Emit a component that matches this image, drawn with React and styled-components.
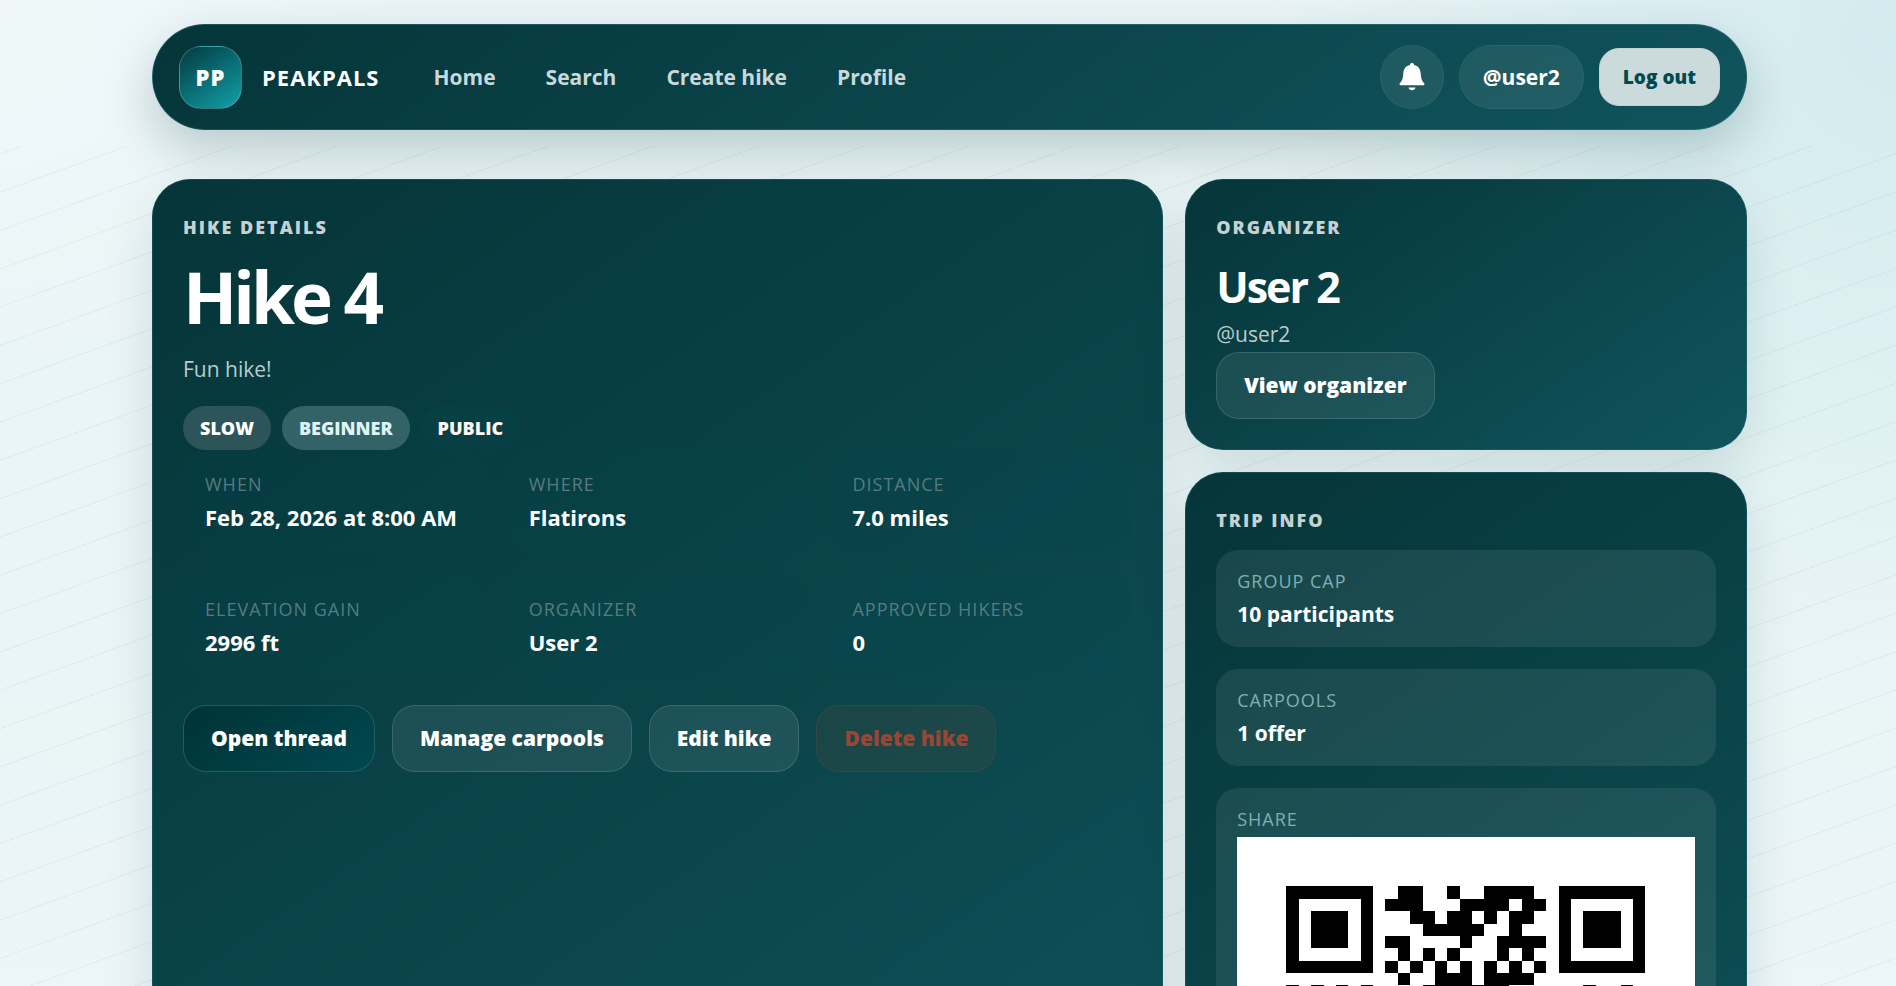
import styled, { createGlobalStyle } from "styled-components";

const GlobalStyle = createGlobalStyle`
  * {
    box-sizing: border-box;
  }

  body {
    margin: 0;
    font-family: "Segoe UI", "Open Sans", "Noto Sans", sans-serif;
    font-size: 21px;
    line-height: 35px;
    color: white;
    background: #eaf4f7;
  }

  h1, h2, p, dl, dt, dd {
    margin: 0;
  }

  a {
    color: inherit;
    text-decoration: none;
  }
`;

const Page = styled.div`
  position: relative;
  height: 100vh;
  overflow-y: auto;
  scrollbar-width: none;
  padding: 24px 149px 48px 152px;
  background:
    radial-gradient(circle at 0 0, rgba(255, 255, 255, 0.25), transparent 420px),
    radial-gradient(circle at 100% 4%, rgba(0, 150, 155, 0.1), transparent 640px),
    linear-gradient(180deg, #ebf5f8 0%, #e9f5f6 60%, #ecf5f8 100%);
`;

/* thin contour lines behind the cards */
const Contours = styled.div`
  position: absolute;
  inset: 146px 0 0;
  background: repeating-linear-gradient(
    160deg,
    transparent 0 7px,
    rgba(0, 60, 64, 0.05) 7px 8px,
    transparent 8px 36px
  );
`;

const NavBar = styled.header`
  position: relative;
  display: flex;
  align-items: center;
  height: 106px;
  padding: 0 26px;
  border: 1px solid rgba(80, 150, 155, 0.3);
  border-radius: 53px;
  background: linear-gradient(145deg, #053538, #10545c);
  box-shadow: 0 20px 50px rgba(0, 50, 54, 0.22);
`;

const Brand = styled.a`
  display: flex;
  align-items: center;
  gap: 20px;
  font-size: 22px;
  font-weight: 700;
  letter-spacing: 1px;
`;

const BrandMark = styled.span`
  display: flex;
  align-items: center;
  justify-content: center;
  width: 63px;
  height: 63px;
  border: 1px solid rgba(255, 255, 255, 0.2);
  border-radius: 22px;
  background: linear-gradient(145deg, #023a3e, #12a0ab);
  font-weight: 800;
`;

const NavLinks = styled.nav`
  display: flex;
  gap: 50px;
  margin-left: 54px;
  font-weight: 700;
  color: #c9d8da;
`;

const NavActions = styled.div`
  display: flex;
  align-items: center;
  gap: 15px;
  margin-left: auto;
`;

const GlassPill = styled.a`
  display: flex;
  align-items: center;
  justify-content: center;
  min-width: 64px;
  height: 64px;
  padding: 0 ${(props) => (props.$round ? "0" : "23px")};
  border: 1px solid rgba(255, 255, 255, 0.12);
  border-radius: 32px;
  background: rgba(255, 255, 255, 0.08);
  background-clip: padding-box;
  font-weight: 700;
`;

const LogoutButton = styled.button`
  height: 58px;
  padding: 0 23px;
  border: 1px solid #c3d3d4;
  border-radius: 20px;
  background: #cbdada;
  color: #004a50;
  font: inherit;
  font-size: 19px;
  font-weight: 800;
  cursor: pointer;
`;

const Layout = styled.main`
  position: relative;
  display: grid;
  grid-template-columns: minmax(0, 9fr) minmax(0, 5fr);
  gap: 22px;
  margin-top: 49px;
`;

const Sidebar = styled.aside`
  display: flex;
  flex-direction: column;
  gap: 22px;
`;

const Card = styled.section`
  padding: 31px;
  border-radius: 38px;
  background: linear-gradient(145deg, #053538, #10545c);
  box-shadow: 0 20px 50px rgba(0, 50, 54, 0.12), inset 0 0 0 1px rgba(60, 140, 145, 0.24);
`;

const Eyebrow = styled.p`
  margin-bottom: 12px;
  font-size: 18px;
  font-weight: 800;
  line-height: 35px;
  letter-spacing: 2px;
  text-transform: uppercase;
  color: #c5d2d3;
`;

const Title = styled.h1`
  font-size: 71px;
  font-weight: 700;
  line-height: 80px;
  letter-spacing: -4px;
`;

const OrganizerName = styled.h2`
  font-size: 43px;
  font-weight: 700;
  line-height: 60px;
  letter-spacing: -2px;
`;

const Muted = styled.p`
  color: #b9cccd;
`;

const Description = styled(Muted)`
  margin: 15px 0 19px;
`;

const Chips = styled.div`
  display: flex;
  gap: 11px;
`;

const chipTones = {
  slow: { bg: "#2d5458", color: "white" },
  beginner: { bg: "#336367", color: "#dff4f6" },
  public: { bg: "#064044", color: "#fff6f0" },
};

const Chip = styled.span`
  padding: 0 17px;
  border-radius: 22px;
  background: ${(props) => chipTones[props.$tone].bg};
  color: ${(props) => chipTones[props.$tone].color};
  font-size: 18px;
  font-weight: 800;
  line-height: 44px;
  text-transform: uppercase;
`;

const MetaGrid = styled.dl`
  display: grid;
  grid-template-columns: repeat(3, minmax(0, 1fr));
  gap: 22px;
  font-size: 22px;
`;

const MetaItem = styled.div`
  padding: 18px 22px;
  border-radius: 26px;
  background: rgba(0, 77, 82, 0.12);
`;

const MetaLabel = styled.dt`
  font-size: 18px;
  line-height: 32px;
  letter-spacing: 1px;
  text-transform: uppercase;
  color: ${(props) => (props.$bright ? "#80afb3" : "#567b80")};
`;

const MetaValue = styled.dd`
  font-weight: 700;
`;

const Actions = styled.div`
  display: flex;
  gap: 17px;
  margin-top: 27px;
`;

const buttonTones = {
  primary: {
    bg: "linear-gradient(145deg, #003336, #00484f)",
    border: "rgba(100, 170, 175, 0.28)",
    color: "white",
  },
  glass: {
    bg: "rgba(255, 255, 255, 0.08)",
    border: "rgba(255, 255, 255, 0.2)",
    color: "white",
  },
  danger: {
    bg: "rgba(150, 70, 50, 0.12)",
    border: "rgba(160, 75, 55, 0.3)",
    color: "#974734",
  },
};

const Button = styled.button`
  height: 67px;
  padding: 0 27px;
  border: 1px solid ${(props) => buttonTones[props.$tone].border};
  border-radius: 23px;
  background: ${(props) => buttonTones[props.$tone].bg};
  background-clip: padding-box;
  color: ${(props) => buttonTones[props.$tone].color};
  font: inherit;
  font-weight: 800;
  cursor: pointer;
`;

const InfoList = styled.dl`
  display: flex;
  flex-direction: column;
  gap: 22px;
`;

const InfoItem = styled.div`
  padding: 15px 21px;
  border-radius: 22px;
  background: rgba(255, 255, 255, 0.08);
`;

const QrFrame = styled.dd`
  margin-top: 2px;

  svg {
    display: block;
    width: 100%;
  }
`;

const details = [
  ["When", "Feb 28, 2026 at 8:00 AM"],
  ["Where", "Flatirons"],
  ["Distance", "7.0 miles"],
  ["Elevation gain", "2996 ft"],
  ["Organizer", "User 2"],
  ["Approved hikers", "0"],
];

const tripInfo = [
  ["Group cap", "10 participants"],
  ["Carpools", "1 offer"],
];

const qrRows = [
  "00000000011001001111000000000",
  "00000000111000111101100000000",
  "00000000001101101011000000000",
  "00000000000111110010000000000",
  "00000000110000100111100000000",
  "00000000010101000101000000000",
  "00000000101010101010100000000",
  "00000000010011101111000000000",
  "10101010000111111100000010010",
];

const finders = [
  [0, 0],
  [22, 0],
  [0, 22],
];

function QrCode() {
  return (
    <svg viewBox="-4 -4 37 37" role="img" aria-label="QR code for this hike" shapeRendering="crispEdges">
      <rect x="-4" y="-4" width="37" height="37" fill="white" />
      {finders.map(([x, y]) => (
        <g key={`${x}-${y}`}>
          <path d={`M${x} ${y}h7v7h-7zM${x + 1} ${y + 1}v5h5v-5z`} fillRule="evenodd" />
          <rect x={x + 2} y={y + 2} width="3" height="3" />
        </g>
      ))}
      {qrRows.map((row, y) =>
        row.split("").map((cell, x) => cell === "1" && <rect key={`${x}-${y}`} x={x} y={y} width="1" height="1" />)
      )}
    </svg>
  );
}

function BellIcon() {
  return (
    <svg width="26" height="30" viewBox="0 0 26 30" fill="white" aria-hidden="true">
      <path d="M13 1c1.3 0 2 .8 2.1 1.9 4 .9 6.3 4 6.6 8 .3 4.6.7 7.3 3.4 10.4.7.8.6 2-.6 2H1.5c-1.2 0-1.3-1.2-.6-2C3.6 18.2 4 15.5 4.3 10.900c.3-4 2.600-7.100 6.600-8C11 1.800 11.700 1 13 1z" />
      <path d="M9.500 25.500h7c-.4 1.700-1.700 2.800-3.500 2.800s-3.100-1.100-3.500-2.800z" />
    </svg>
  );
}

export default function App() {
  return (
    <>
      <GlobalStyle />
      <Page>
        <Contours />
        <NavBar>
          <Brand href="#">
            <BrandMark>PP</BrandMark>
            PEAKPALS
          </Brand>
          <NavLinks>
            <a href="#home">Home</a>
            <a href="#search">Search</a>
            <a href="#create">Create hike</a>
            <a href="#profile">Profile</a>
          </NavLinks>
          <NavActions>
            <GlassPill href="#notifications" aria-label="Notifications" $round>
              <BellIcon />
            </GlassPill>
            <GlassPill href="#me">@user2</GlassPill>
            <LogoutButton type="button">Log out</LogoutButton>
          </NavActions>
        </NavBar>

        <Layout>
          <Card>
            <Eyebrow>Hike details</Eyebrow>
            <Title>Hike 4</Title>
            <Description>Fun hike!</Description>
            <Chips>
              <Chip $tone="slow">Slow</Chip>
              <Chip $tone="beginner">Beginner</Chip>
              <Chip $tone="public">Public</Chip>
            </Chips>
            <MetaGrid>
              {details.map(([label, value]) => (
                <MetaItem key={label}>
                  <MetaLabel>{label}</MetaLabel>
                  <MetaValue>{value}</MetaValue>
                </MetaItem>
              ))}
            </MetaGrid>
            <Actions>
              <Button type="button" $tone="primary">Open thread</Button>
              <Button type="button" $tone="glass">Manage carpools</Button>
              <Button type="button" $tone="glass">Edit hike</Button>
              <Button type="button" $tone="danger">Delete hike</Button>
            </Actions>
          </Card>

          <Sidebar>
            <Card>
              <Eyebrow>Organizer</Eyebrow>
              <OrganizerName>User 2</OrganizerName>
              <Muted>@user2</Muted>
              <Button type="button" $tone="glass">View organizer</Button>
            </Card>

            <Card>
              <Eyebrow>Trip info</Eyebrow>
              <InfoList>
                {tripInfo.map(([label, value]) => (
                  <InfoItem key={label}>
                    <MetaLabel $bright>{label}</MetaLabel>
                    <MetaValue>{value}</MetaValue>
                  </InfoItem>
                ))}
                <InfoItem>
                  <MetaLabel $bright>Share</MetaLabel>
                  <QrFrame>
                    <QrCode />
                  </QrFrame>
                </InfoItem>
              </InfoList>
            </Card>
          </Sidebar>
        </Layout>
      </Page>
    </>
  );
}
